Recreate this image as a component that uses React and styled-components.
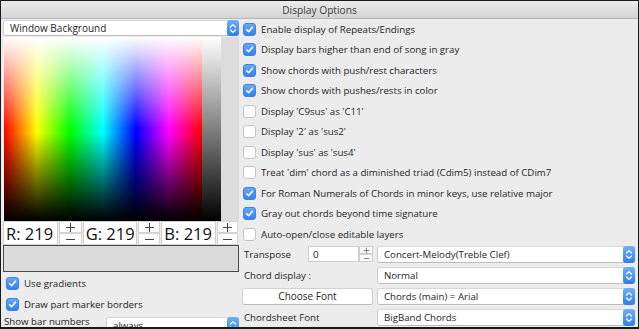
import React from 'react';
import styled, { createGlobalStyle } from 'styled-components';

const Global = createGlobalStyle`
  html, body { margin: 0; padding: 0; background: #ffffff; }
  body { font-family: "Open Sans", "Liberation Sans", sans-serif; }
  * { box-sizing: border-box; }
`;

const Window = styled.div`
  width: 639px;
  height: 329px;
  border: 1px solid #1a1a1a;
  border-bottom-width: 2px;
  background: #ececec;
  display: flex;
  flex-direction: column;
  overflow: hidden;
  font-family: "Open Sans", "Liberation Sans", sans-serif;
  font-size: 9.7px;
  color: #1e1e1e;
`;

const TitleBar = styled.div`
  flex: none;
  height: 18px;
  display: flex;
  align-items: center;
  justify-content: center;
  background: linear-gradient(#ececec, #d4d4d4);
  border-bottom: 1px solid #b8b8b8;
  font-size: 10.2px;
  color: #3b3b3b;
`;

const Body = styled.div`
  flex: 1;
  min-height: 0;
  display: flex;
  overflow: hidden;
`;

const LeftColumn = styled.div`
  width: 238px;
  flex: none;
  padding-left: 2px;
  display: flex;
  flex-direction: column;
  overflow: hidden;
  & > * { flex-shrink: 0; }
`;

const RightColumn = styled.div`
  flex: 1;
  min-width: 0;
  padding: 0 3px 0 3px;
  display: flex;
  flex-direction: column;
  & > * { flex-shrink: 0; }
`;

const SelectBox = styled.div`
  position: relative;
  height: 17px;
  margin-top: ${p => p.$mt || 0}px;
  flex: 1;
  background: #ffffff;
  border: 1px solid #cfcfcf;
  border-top-color: #d8d8d8;
  border-bottom-color: #bdbdbd;
  border-radius: 3px;
  display: flex;
  align-items: center;
  padding-left: ${p => p.$pl || 6}px;
  font-size: ${p => p.$fs || 9.7}px;
  color: #1e1e1e;
  white-space: nowrap;
`;

const Stepper = styled.span`
  position: absolute;
  right: -1px;
  top: -1px;
  bottom: -1px;
  width: 12px;
  border-radius: 3px;
  background: linear-gradient(#6fb0fa, #2f7fea);
  display: flex;
  align-items: center;
  justify-content: center;
`;

const Picker = styled.div`
  margin-top: 1px;
  height: 184px;
  display: flex;
  background: #dcdcdc;
`;

const Spectrum = styled.div`
  width: 199px;
  border-left: 1px solid #f4f4f4;
  background:
    linear-gradient(to bottom, #ffffff 0%, rgba(255,255,255,0.8) 10%, rgba(255,255,255,0) 50%, rgba(0,0,0,0) 52%, rgba(0,0,0,0.85) 92%, #000 100%),
    linear-gradient(to right, #ff0000 0%, #ffff00 16.6%, #00ff00 33.3%, #00ffff 50%, #0000ff 66.6%, #ff00ff 83.3%, #ff0000 100%);
`;

const GrayBar = styled.div`
  width: 19px;
  background: linear-gradient(to bottom, #ffffff, #000000);
`;

const RgbRow = styled.div`
  height: 24px;
  display: flex;
`;

const RgbField = styled.div`
  flex: 1;
  background: #ffffff;
  border: 1px solid #d0d0d0;
  display: flex;
  align-items: center;
  padding-left: 2px;
  font-size: 16.5px;
  color: #111;
  white-space: nowrap;
`;

const PlusMinus = styled.div`
  width: ${p => p.$w || 24}px;
  display: flex;
  flex-direction: column;
  padding: 0 1px;
  background: #ececec;
`;

const PmButton = styled.div`
  height: 12px;
  background: #ffffff;
  border: 1px solid #d4d4d4;
  display: flex;
  align-items: center;
  justify-content: center;
`;

const Swatch = styled.div`
  height: 27px;
  background: #dbdbdb;
  border: 1px solid #4a4a4a;
`;

const CheckRow = styled.div`
  height: ${p => p.$h || 20.5}px;
  display: flex;
  align-items: center;
  gap: 5px;
  padding-left: ${p => p.$pl || 0}px;
  white-space: nowrap;
`;

const Box = styled.span`
  width: 13px;
  height: 13px;
  flex: none;
  border-radius: 3px;
  display: flex;
  align-items: center;
  justify-content: center;
  background: ${p => (p.$checked ? 'linear-gradient(#66a9f8, #3580ec)' : '#ffffff')};
  border: 1px solid ${p => (p.$checked ? '#3a83e6' : '#c4c4c4')};
`;

const BottomRow = styled.div`
  display: flex;
  align-items: flex-start;
  height: 16px;
  padding-left: 1px;
  gap: 10px;
  white-space: nowrap;
`;

const BarLabel = styled.span`
  width: 92px;
  line-height: 14px;
`;

const ControlGrid = styled.div`
  margin-top: 1px;
  display: grid;
  grid-template-columns: 131px 1fr;
  grid-auto-rows: 17px;
  row-gap: 4px;
  column-gap: 4px;
  align-items: center;
`;

const Label = styled.div`
  padding-left: 2px;
  white-space: nowrap;
  display: flex;
  align-items: center;
  height: 100%;
`;

const TransposeCell = styled.div`
  display: flex;
  align-items: center;
  height: 100%;
  padding-left: 2px;
`;

const NumberInput = styled.div`
  margin-left: auto;
  width: 51px;
  height: 16px;
  background: #fff;
  border: 1px solid #cfcfcf;
  display: flex;
  align-items: center;
  padding-left: 4px;
`;

const MiniStepper = styled.div`
  width: 14px;
  height: 16px;
  display: flex;
  flex-direction: column;
`;

const MiniBtn = styled.div`
  height: 8px;
  background: #fff;
  border: 1px solid #cfcfcf;
  display: flex;
  align-items: center;
  justify-content: center;
`;

const Button = styled.div`
  height: 17px;
  background: #fff;
  border: 1px solid #d2d2d2;
  border-bottom-color: #bcbcbc;
  border-radius: 3px;
  display: flex;
  align-items: center;
  justify-content: center;
  font-size: 10px;
  color: #1e1e1e;
`;

const Check = ({ checked }) => (
  <Box $checked={checked}>
    {checked && (
      <svg width="9" height="9" viewBox="0 0 9 9">
        <path d="M1.6 4.8 L3.6 6.8 L7.4 2.2" fill="none" stroke="#fff" strokeWidth="1.5" strokeLinecap="round" strokeLinejoin="round" />
      </svg>
    )}
  </Box>
);

const Arrows = () => (
  <svg width="12" height="17" viewBox="0 0 12 17">
    <path d="M3.5 7 L6 4.6 L8.5 7" fill="none" stroke="#fff" strokeWidth="1.3" strokeLinecap="round" strokeLinejoin="round" />
    <path d="M3.5 10 L6 12.4 L8.5 10" fill="none" stroke="#fff" strokeWidth="1.3" strokeLinecap="round" strokeLinejoin="round" />
  </svg>
);

const PlusIcon = ({ size = 11 }) => (
  <svg width={size} height={size} viewBox="0 0 11 11">
    <path d="M5.5 1 V10 M1 5.5 H10" stroke="#444" strokeWidth="1" fill="none" />
  </svg>
);

const MinusIcon = ({ size = 11 }) => (
  <svg width={size} height={size} viewBox="0 0 11 11">
    <path d="M1 5.5 H10" stroke="#444" strokeWidth="1" fill="none" />
  </svg>
);

const Select = ({ children, ...rest }) => (
  <SelectBox {...rest}>
    {children}
    <Stepper>
      <Arrows />
    </Stepper>
  </SelectBox>
);

const options = [
  ['Enable display of Repeats/Endings', true],
  ['Display bars higher than end of song in gray', true],
  ['Show chords with push/rest characters', true],
  ['Show chords with pushes/rests in color', true],
  ["Display 'C9sus' as 'C11'", false],
  ["Display '2' as 'sus2'", false],
  ["Display 'sus' as 'sus4'", false],
  ["Treat 'dim' chord as a diminished triad (Cdim5) instead of CDim7", false],
  ['For Roman Numerals of Chords in minor keys, use relative major', true],
  ['Gray out chords beyond time signature', true],
  ['Auto-open/close editable layers', false],
];

const rgb = [
  ['R', 219, 25],
  ['G', 219, 24],
  ['B', 219, 23],
];

export default function App() {
  return (
    <>
      <Global />
      <Window>
        <TitleBar>Display Options</TitleBar>
        <Body>
          <LeftColumn>
            <Select $mt={1} $pl={6} $fs={10}>Window Background</Select>
            <Picker>
              <Spectrum />
              <GrayBar />
            </Picker>
            <RgbRow>
              {rgb.map(([k, v, w]) => (
                <React.Fragment key={k}>
                  <RgbField>{k}: {v}</RgbField>
                  <PlusMinus $w={w}>
                    <PmButton><PlusIcon /></PmButton>
                    <PmButton><MinusIcon /></PmButton>
                  </PlusMinus>
                </React.Fragment>
              ))}
            </RgbRow>
            <Swatch />
            <CheckRow $h={21} $pl={3} style={{ marginTop: 1 }}>
              <Check checked />
              Use gradients
            </CheckRow>
            <CheckRow $h={21} $pl={3}>
              <Check checked />
              Draw part marker borders
            </CheckRow>
            <BottomRow>
              <BarLabel>Show bar numbers</BarLabel>
              <Select $mt={2} $pl={6}>always</Select>
            </BottomRow>
          </LeftColumn>
          <RightColumn>
            {options.map(([text, checked]) => (
              <CheckRow key={text} $pl={1}>
                <Check checked={checked} />
                {text}
              </CheckRow>
            ))}
            <ControlGrid>
              <TransposeCell>
                Transpose
                <NumberInput>0</NumberInput>
                <MiniStepper>
                  <MiniBtn><PlusIcon size={7} /></MiniBtn>
                  <MiniBtn><MinusIcon size={7} /></MiniBtn>
                </MiniStepper>
              </TransposeCell>
              <Select>Concert-Melody(Treble Clef)</Select>
              <Label>Chord display :</Label>
              <Select>Normal</Select>
              <Button>Choose Font</Button>
              <Select>Chords (main) = Arial</Select>
              <Label>Chordsheet Font</Label>
              <Select>BigBand Chords</Select>
            </ControlGrid>
          </RightColumn>
        </Body>
      </Window>
    </>
  );
}
